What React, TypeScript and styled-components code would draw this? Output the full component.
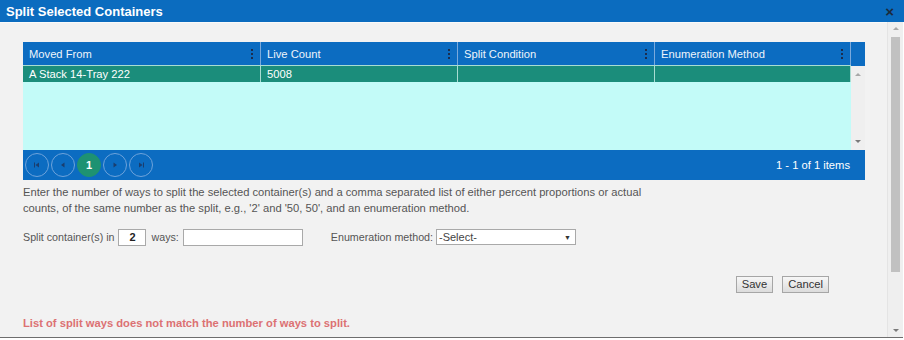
import React from "react";
import styled, { createGlobalStyle } from "styled-components";

const Global = createGlobalStyle`
  html, body { margin: 0; padding: 0; background: #ffffff; }
  body { font-family: "Liberation Sans", Arial, sans-serif; }
  #root { width: 904px; height: 340px; overflow: hidden; }
`;

const Dialog = styled.div`
  width: 904px;
  height: 338px;
  display: flex;
  flex-direction: column;
`;

const TitleBar = styled.div`
  height: 22px;
  flex: none;
  background: #0b6cbf;
  display: flex;
  align-items: center;
  justify-content: space-between;
  padding: 0 10px 0 6px;
`;

const Title = styled.div`
  color: #ffffff;
  font-weight: bold;
  font-size: 13px;
`;

const Close = styled.div`
  color: #1c2b3d;
  font-size: 15px;
  font-weight: bold;
  line-height: 1;
`;

const Body = styled.div`
  flex: 1;
  display: flex;
  width: 902px;
  border-right: 1px solid #6e6e6e;
  border-bottom: 1px solid #6e6e6e;
  background: #f2f2f2;
  min-height: 0;
`;

const Content = styled.div`
  flex: 1;
  display: flex;
  flex-direction: column;
  padding: 19px 22px 0 23px;
  border-top: 1px solid #fafafa;
`;

const ScrollTrack = styled.div<{ $w: number }>`
  width: ${(p) => p.$w}px;
  flex: none;
  background: #efefef;
  display: flex;
  flex-direction: column;
  align-items: center;
  border-left: 1px solid #e4e4e4;
`;

const ScrollArrow = styled.div<{ $down?: boolean }>`
  height: 13px;
  width: 100%;
  display: flex;
  align-items: center;
  justify-content: center;
  &::after {
    content: "";
    width: 0;
    height: 0;
    border-left: 3px solid transparent;
    border-right: 3px solid transparent;
    ${(p) =>
      p.$down
        ? "border-top: 3px solid #7a7a7a;"
        : "border-bottom: 3px solid #a8a8a8;"}
  }
`;

const Thumb = styled.div<{ $h: number }>`
  width: 9px;
  height: ${(p) => p.$h}px;
  background: #c1c1c1;
  margin-top: 2px;
`;

const Spacer = styled.div`
  flex: 1;
`;

const Grid = styled.div`
  width: 842px;
  display: flex;
  flex-direction: column;
`;

const cols = "238px 197px 197px 196px";

const HeaderRow = styled.div`
  display: grid;
  grid-template-columns: ${cols} 14px;
  height: 24px;
  background: #0c6cc1;
`;

const HeaderCell = styled.div`
  display: flex;
  align-items: center;
  justify-content: space-between;
  padding: 0 7px 0 6px;
  color: #eef4fb;
  font-size: 11.2px;
  border-right: 1px solid #7aa9dc;
  &:last-child { border-right: none; }
`;

const Kebab = styled.span`
  display: flex;
  flex-direction: column;
  gap: 2px;
  & > i {
    width: 2px;
    height: 2px;
    background: #1b2d4f;
    display: block;
  }
`;

const DataArea = styled.div`
  display: flex;
  height: 84px;
`;

const DataTable = styled.div`
  flex: 1;
  background: #c3fbf8;
`;

const DataRow = styled.div`
  display: grid;
  grid-template-columns: ${cols};
  height: 16px;
  background: #1b8d7b;
`;

const DataCell = styled.div`
  color: #ffffff;
  font-size: 11.2px;
  line-height: 16px;
  padding-left: 6px;
  border-right: 1px solid #a9dcd2;
  border-top: 1px solid #a9dcd2;
  margin-top: -1px;
`;

const InnerScroll = styled.div`
  width: 14px;
  background: #efefef;
  display: flex;
  flex-direction: column;
  justify-content: space-between;
  padding: 2px 0;
`;

const Pager = styled.div`
  height: 30px;
  background: #0c6cc1;
  display: flex;
  align-items: center;
  justify-content: space-between;
  padding: 0 15px 0 2px;
`;

const PagerButtons = styled.div`
  display: flex;
  gap: 2px;
`;

const PageBtn = styled.div<{ $active?: boolean }>`
  width: 22px;
  height: 22px;
  border-radius: 50%;
  border: 1px solid ${(p) => (p.$active ? "#1e9272" : "#6ea3db")};
  background: ${(p) => (p.$active ? "#1e9272" : "transparent")};
  color: #ffffff;
  font-weight: bold;
  font-size: 11px;
  display: flex;
  align-items: center;
  justify-content: center;
`;

const PagerInfo = styled.div`
  color: #ffffff;
  font-size: 11.2px;
`;

const Help = styled.p`
  margin: 4px 0 0 0;
  width: 640px;
  color: #555555;
  font-size: 11.2px;
  line-height: 16px;
`;

const FormRow = styled.div`
  display: flex;
  align-items: center;
  margin-top: 12px;
  height: 18px;
  color: #555555;
  font-size: 10.7px;
`;

const CountInput = styled.div`
  width: 26px;
  height: 15px;
  border: 1px solid #a9a9a9;
  background: #ffffff;
  color: #222;
  font-weight: bold;
  font-size: 11px;
  text-align: center;
  line-height: 15px;
  margin: 0 5px 0 4px;
`;

const WaysInput = styled.div`
  width: 118px;
  height: 15px;
  border: 1px solid #a9a9a9;
  background: #ffffff;
  margin-left: 4px;
`;

const EnumLabel = styled.span`
  margin-left: 28px;
`;

const Select = styled.div`
  width: 132px;
  height: 14px;
  border: 1px solid #a9a9a9;
  background: #ffffff;
  margin-left: 3px;
  display: flex;
  align-items: center;
  justify-content: space-between;
  padding: 0 4px 0 2px;
  box-sizing: content-box;
  color: #444;
  font-size: 11px;
  & > span:last-child { font-size: 7px; color: #333; }
`;

const ButtonRow = styled.div`
  display: flex;
  justify-content: flex-end;
  gap: 9px;
  margin-top: 30px;
  padding-right: 36px;
`;

const Button = styled.div`
  height: 15px;
  padding: 0 5px;
  border: 1px solid #a6a6a6;
  background: linear-gradient(#f7f7f7, #dcdcdc);
  color: #333;
  font-size: 11.2px;
  line-height: 15px;
`;

const ErrorText = styled.div`
  margin-top: 24px;
  color: #dc7173;
  font-weight: bold;
  font-size: 11.2px;
`;

const Tri = ({ dir }: { dir: "first" | "prev" | "next" | "last" }) => (
  <svg width="8" height="8" viewBox="0 0 8 8">
    {dir === "first" && (
      <>
        <rect x="1" y="1.5" width="1" height="5" fill="#1b3e6e" />
        <path d="M6 1.5 L2.5 4 L6 6.5 Z" fill="#1b3e6e" />
      </>
    )}
    {dir === "prev" && <path d="M5.5 1.5 L2 4 L5.5 6.5 Z" fill="#1b3e6e" />}
    {dir === "next" && <path d="M2.5 1.5 L6 4 L2.5 6.5 Z" fill="#1b3e6e" />}
    {dir === "last" && (
      <>
        <path d="M2 1.5 L5.5 4 L2 6.5 Z" fill="#1b3e6e" />
        <rect x="6" y="1.5" width="1" height="5" fill="#1b3e6e" />
      </>
    )}
  </svg>
);

const KebabIcon = () => (
  <Kebab>
    <i />
    <i />
    <i />
  </Kebab>
);

const headers = ["Moved From", "Live Count", "Split Condition", "Enumeration Method"];

export default function App() {
  return (
    <>
      <Global />
      <Dialog>
        <TitleBar>
          <Title>Split Selected Containers</Title>
          <Close>×</Close>
        </TitleBar>
        <Body>
          <Content>
            <Grid>
              <HeaderRow>
                {headers.map((h) => (
                  <HeaderCell key={h}>
                    <span>{h}</span>
                    <KebabIcon />
                  </HeaderCell>
                ))}
                <HeaderCell />
              </HeaderRow>
              <DataArea>
                <DataTable>
                  <DataRow>
                    <DataCell>A Stack 14-Tray 222</DataCell>
                    <DataCell>5008</DataCell>
                    <DataCell />
                    <DataCell />
                  </DataRow>
                </DataTable>
                <InnerScroll>
                  <ScrollArrow />
                  <ScrollArrow $down />
                </InnerScroll>
              </DataArea>
              <Pager>
                <PagerButtons>
                  <PageBtn><Tri dir="first" /></PageBtn>
                  <PageBtn><Tri dir="prev" /></PageBtn>
                  <PageBtn $active>1</PageBtn>
                  <PageBtn><Tri dir="next" /></PageBtn>
                  <PageBtn><Tri dir="last" /></PageBtn>
                </PagerButtons>
                <PagerInfo>1 - 1 of 1 items</PagerInfo>
              </Pager>
            </Grid>
            <Help>
              Enter the number of ways to split the selected container(s) and a comma separated list of either percent
              proportions or actual counts, of the same number as the split, e.g., '2' and '50, 50', and an enumeration
              method.
            </Help>
            <FormRow>
              <span>Split container(s) in</span>
              <CountInput>2</CountInput>
              <span>ways:</span>
              <WaysInput />
              <EnumLabel>Enumeration method:</EnumLabel>
              <Select>
                <span>-Select-</span>
                <span>▼</span>
              </Select>
            </FormRow>
            <ButtonRow>
              <Button>Save</Button>
              <Button>Cancel</Button>
            </ButtonRow>
            <ErrorText>List of split ways does not match the number of ways to split.</ErrorText>
          </Content>
          <ScrollTrack $w={15}>
            <ScrollArrow />
            <Thumb $h={235} />
            <Spacer />
            <ScrollArrow $down />
          </ScrollTrack>
        </Body>
      </Dialog>
    </>
  );
}
